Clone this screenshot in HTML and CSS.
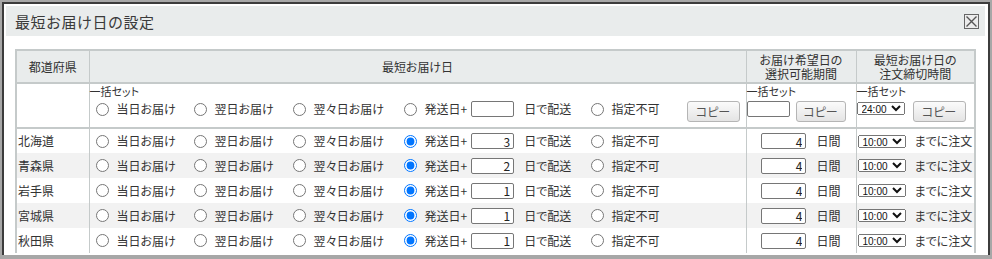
FILE: index.html
```html
<!DOCTYPE html>
<html lang="ja">
<head>
<meta charset="utf-8">
<title>最短お届け日の設定</title>
<link rel="stylesheet" href="styles.css">
</head>
<body>
<div class="dialog">
  <div class="titlebar">
    <span class="title">最短お届け日の設定</span>
    <button class="close" type="button" aria-label="閉じる"><svg width="13" height="13" viewBox="0 0 13 13"><path d="M1.5 1.5 L11.5 11.5 M11.5 1.5 L1.5 11.5" stroke="#555" stroke-width="1.4" fill="none"/></svg></button>
  </div>
  <div class="content">
    <table class="grid">
      <colgroup><col class="c-pref"><col class="c-min"><col class="c-period"><col class="c-cut"></colgroup>
      <thead>
        <tr class="head">
          <th>都道府県</th>
          <th>最短お届け日</th>
          <th>お届け希望日の<br>選択可能期間</th>
          <th>最短お届け日の<br>注文締切時間</th>
        </tr>
        <tr class="bulk">
          <td></td>
          <td>
            <div class="bulk-label">一括セット</div>
            <div class="bulk-line">
              <div class="opts">
                <label class="opt"><input type="radio" name="all"><span>当日お届け</span></label>
                <label class="opt"><input type="radio" name="all"><span>翌日お届け</span></label>
                <label class="opt"><input type="radio" name="all"><span>翌々日お届け</span></label>
                <label class="opt"><input type="radio" name="all"><span>発送日+</span><input class="num days" type="text" value=""><span>日で配送</span></label>
                <label class="opt"><input type="radio" name="all"><span>指定不可</span></label>
              </div>
              <button class="copy" type="button">コピー</button>
            </div>
          </td>
          <td>
            <div class="bulk-label">一括セット</div>
            <div class="bulk-ctl period-ctl">
              <input class="num bulk-num" type="text" value="">
              <button class="copy copy-narrow" type="button">コピー</button>
            </div>
          </td>
          <td>
            <div class="bulk-label">一括セット</div>
            <div class="bulk-ctl cut-ctl">
              <select class="time"><option>10:00</option><option>12:00</option><option>15:00</option><option selected>24:00</option></select>
              <button class="copy" type="button">コピー</button>
            </div>
          </td>
        </tr>
      </thead>
      <tbody>
        <tr class="row">
          <td class="pref">北海道</td>
          <td><div class="opts">
            <label class="opt"><input type="radio" name="p1"><span>当日お届け</span></label>
            <label class="opt"><input type="radio" name="p1"><span>翌日お届け</span></label>
            <label class="opt"><input type="radio" name="p1"><span>翌々日お届け</span></label>
            <label class="opt"><input type="radio" name="p1" checked><span>発送日+</span><input class="num days" type="text" value="3"><span>日で配送</span></label>
            <label class="opt"><input type="radio" name="p1"><span>指定不可</span></label>
          </div></td>
          <td><div class="period"><input class="num period-num" type="text" value="4"><span>日間</span></div></td>
          <td><div class="cutoff"><select class="time"><option selected>10:00</option><option>12:00</option><option>15:00</option><option>24:00</option></select><span>までに注文</span></div></td>
        </tr>
        <tr class="row">
          <td class="pref">青森県</td>
          <td><div class="opts">
            <label class="opt"><input type="radio" name="p2"><span>当日お届け</span></label>
            <label class="opt"><input type="radio" name="p2"><span>翌日お届け</span></label>
            <label class="opt"><input type="radio" name="p2"><span>翌々日お届け</span></label>
            <label class="opt"><input type="radio" name="p2" checked><span>発送日+</span><input class="num days" type="text" value="2"><span>日で配送</span></label>
            <label class="opt"><input type="radio" name="p2"><span>指定不可</span></label>
          </div></td>
          <td><div class="period"><input class="num period-num" type="text" value="4"><span>日間</span></div></td>
          <td><div class="cutoff"><select class="time"><option selected>10:00</option><option>12:00</option><option>15:00</option><option>24:00</option></select><span>までに注文</span></div></td>
        </tr>
        <tr class="row">
          <td class="pref">岩手県</td>
          <td><div class="opts">
            <label class="opt"><input type="radio" name="p3"><span>当日お届け</span></label>
            <label class="opt"><input type="radio" name="p3"><span>翌日お届け</span></label>
            <label class="opt"><input type="radio" name="p3"><span>翌々日お届け</span></label>
            <label class="opt"><input type="radio" name="p3" checked><span>発送日+</span><input class="num days" type="text" value="1"><span>日で配送</span></label>
            <label class="opt"><input type="radio" name="p3"><span>指定不可</span></label>
          </div></td>
          <td><div class="period"><input class="num period-num" type="text" value="4"><span>日間</span></div></td>
          <td><div class="cutoff"><select class="time"><option selected>10:00</option><option>12:00</option><option>15:00</option><option>24:00</option></select><span>までに注文</span></div></td>
        </tr>
        <tr class="row">
          <td class="pref">宮城県</td>
          <td><div class="opts">
            <label class="opt"><input type="radio" name="p4"><span>当日お届け</span></label>
            <label class="opt"><input type="radio" name="p4"><span>翌日お届け</span></label>
            <label class="opt"><input type="radio" name="p4"><span>翌々日お届け</span></label>
            <label class="opt"><input type="radio" name="p4" checked><span>発送日+</span><input class="num days" type="text" value="1"><span>日で配送</span></label>
            <label class="opt"><input type="radio" name="p4"><span>指定不可</span></label>
          </div></td>
          <td><div class="period"><input class="num period-num" type="text" value="4"><span>日間</span></div></td>
          <td><div class="cutoff"><select class="time"><option selected>10:00</option><option>12:00</option><option>15:00</option><option>24:00</option></select><span>までに注文</span></div></td>
        </tr>
        <tr class="row">
          <td class="pref">秋田県</td>
          <td><div class="opts">
            <label class="opt"><input type="radio" name="p5"><span>当日お届け</span></label>
            <label class="opt"><input type="radio" name="p5"><span>翌日お届け</span></label>
            <label class="opt"><input type="radio" name="p5"><span>翌々日お届け</span></label>
            <label class="opt"><input type="radio" name="p5" checked><span>発送日+</span><input class="num days" type="text" value="1"><span>日で配送</span></label>
            <label class="opt"><input type="radio" name="p5"><span>指定不可</span></label>
          </div></td>
          <td><div class="period"><input class="num period-num" type="text" value="4"><span>日間</span></div></td>
          <td><div class="cutoff"><select class="time"><option selected>10:00</option><option>12:00</option><option>15:00</option><option>24:00</option></select><span>までに注文</span></div></td>
        </tr>
      </tbody>
    </table>
  </div>
</div>
</body>
</html>
```

FILE: styles.css
```css
* { box-sizing: border-box; }
html, body { margin: 0; }
body {
  background: #a7a7a7;
  font-family: "Noto Sans CJK JP", "Noto Sans", sans-serif;
  font-size: 12px;
  color: #333;
  font-feature-settings: "palt";
  height: 259px;
  overflow: hidden;
}
.dialog {
  margin: 2px 2px 0;
  height: 253px;
  border: 2px solid #3c3c3c;
  border-bottom: 0;
  background: #fff;
  padding: 2px 3px 0 2px;
  overflow: hidden;
}
.titlebar {
  height: 30px;
  background: #e9ecec;
  display: flex;
  align-items: center;
  justify-content: space-between;
  padding: 0 6px 0 9px;
}
.title {
  font-size: 15px;
  letter-spacing: 0.5px;
  color: #3a3a3a;
  line-height: 1;
  font-feature-settings: normal;
}
.close {
  width: 15px;
  height: 15px;
  padding: 0;
  border: 1px solid #666;
  background: #ececec;
  display: flex;
  align-items: center;
  justify-content: center;
  margin-top: 1px;
}
.close svg { display: block; }
.content { padding: 13px 0 0 9px; }
.grid {
  width: 959px;
  table-layout: fixed;
  border-collapse: collapse;
  border: 2px solid #c5caca;
  border-bottom: 0;
}
.c-pref { width: 73px; }
.c-min { width: 657px; }
.c-period { width: 110px; }
.c-cut { width: 119px; }
.grid th, .grid td {
  padding: 0;
  border-left: 1px solid #c5caca;
  border-right: 1px solid #c5caca;
  line-height: 14px;
}
.head th {
  height: 33px;
  background: #e9ecec;
  font-weight: normal;
  line-height: 14px;
  text-align: center;
  vertical-align: middle;
  border-bottom: 2px solid #c5caca;
}
.bulk td {
  height: 45px;
  vertical-align: top;
  border-bottom: 2px solid #c5caca;
}
.bulk-label { height: 14px; line-height: 14px; font-size: 11px; white-space: nowrap; }
.bulk-line {
  display: flex;
  justify-content: space-between;
  align-items: flex-start;
  padding-right: 6px;
  margin-top: 3px;
}
.row td { height: 25px; vertical-align: middle; }
.row:nth-child(even) { background: #f2f2f2; }
.pref { padding-left: 1px !important; white-space: nowrap; }
.opts {
  display: grid;
  grid-template-columns: 98px 99px 111px 187px auto;
  align-items: center;
  padding-left: 6px;
  height: 16px;
}
.opt { display: flex; align-items: center; white-space: nowrap; }
.opt input[type="radio"] { margin: 0 8px 0 0; width: 13px; height: 13px; flex: none; }
.num {
  font: inherit;
  font-family: "Noto Sans CJK JP", sans-serif;
  font-size: 12px;
  height: 16px;
  padding: 0 3px;
  border: 1px solid #767676;
  border-radius: 2px;
  text-align: right;
  color: #222;
  background: #fff;
  line-height: 14px;
}
.days { width: 43px; margin: 0 10px 0 4px; flex: none; }
.bulk-num { width: 43px; }
.period-num { width: 45px; }
.copy {
  width: 53px;
  height: 21px;
  padding: 0;
  border: 1px solid #b5b5b5;
  border-radius: 3px;
  background: linear-gradient(#fbfbfb, #e4e4e4);
  font-family: "Noto Sans CJK JP", sans-serif;
  font-size: 12px;
  font-feature-settings: "palt";
  color: #555;
  flex: none;
}
.copy-narrow { width: 50px; }
.bulk-ctl { display: flex; align-items: flex-start; margin-top: 3px; white-space: nowrap; }
.period-ctl { gap: 6px; }
.cut-ctl { gap: 8px; }
.cut-ctl .time { margin-top: 1px; }
.time {
  font-family: "Liberation Sans", sans-serif;
  font-size: 10px;
  width: 48px;
  height: 13px;
  padding: 0;
  color: #111;
  flex: none;
}
.period { display: flex; justify-content: center; align-items: center; gap: 10px; white-space: nowrap; }
.cutoff { display: flex; align-items: center; gap: 9px; padding-left: 1px; white-space: nowrap; }
```
